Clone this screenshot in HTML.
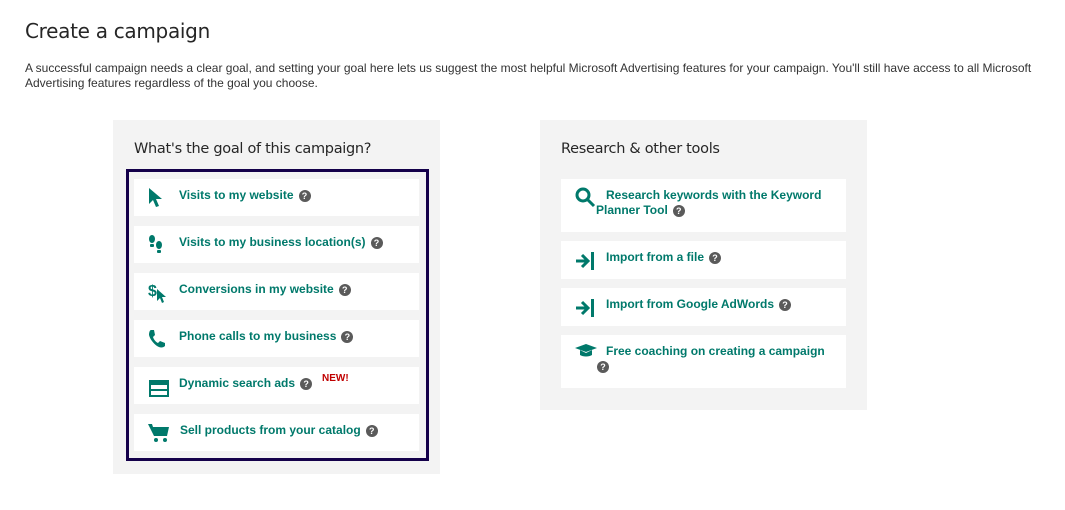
<!DOCTYPE html>
<html><head><style>
*{margin:0;padding:0;box-sizing:border-box}
body{width:1065px;height:510px;background:#fff;font-family:"Liberation Sans",Arial,sans-serif;position:relative;overflow:hidden;color:#333}
.a{position:absolute}
h1{position:absolute;left:25px;top:19px;font-size:20px;font-weight:normal;color:#262626;font-family:"DejaVu Sans","Liberation Sans",sans-serif;letter-spacing:-0.3px}
p.d{position:absolute;left:25px;top:61px;width:1020px;font-size:12px;line-height:15px;color:#333}
.panel{background:#f3f3f3}
.ph{position:absolute;font-size:14.5px;color:#262626;font-family:"DejaVu Sans","Liberation Sans",sans-serif;letter-spacing:-0.3px}
.it{position:absolute;background:#fff;color:#00796b;font-weight:bold;font-size:12px}
.it .t{position:absolute;top:9px;left:45px;white-space:nowrap}
.it svg.ic{position:absolute}
.q{display:inline-block;width:12px;height:12px;border-radius:50%;background:#5a5a5a;color:#fff;font-size:9px;line-height:12px;text-align:center;vertical-align:0px;margin-left:5px}
</style></head><body>
<h1>Create a campaign</h1>
<p class="d">A successful campaign needs a clear goal, and setting your goal here lets us suggest the most helpful Microsoft Advertising features for your campaign. You'll still have access to all Microsoft Advertising features regardless of the goal you choose.</p>

<div class="a panel" style="left:113px;top:120px;width:327px;height:354px"></div>
<div class="ph" style="left:134px;top:141px">What's the goal of this campaign?</div>
<div class="a" style="left:126px;top:169px;width:303px;height:292px;border:3px solid #14004a"></div>

<div class="it" style="left:134px;top:179px;width:285px;height:37px">
<svg class="ic" style="left:14px;top:8px" width="16" height="22" viewBox="0 0 16 22"><path d="M1 1 L1 17 L5 13 L8 20 L11 19 L8 12 L14 12 Z" fill="#00796b"/></svg>
<span class="t">Visits to my website<span class="q">?</span></span></div>

<div class="it" style="left:134px;top:226px;width:285px;height:37px">
<svg class="ic" style="left:14px;top:8px" width="16" height="22" viewBox="0 0 16 22"><ellipse cx="4" cy="5" rx="3" ry="4" fill="#00796b"/><rect x="2" y="10" width="4" height="3" rx="1" fill="#00796b"/><ellipse cx="11" cy="11" rx="3" ry="4" fill="#00796b"/><rect x="9" y="16" width="4" height="3" rx="1" fill="#00796b"/></svg>
<span class="t">Visits to my business location(s)<span class="q">?</span></span></div>

<div class="it" style="left:134px;top:273px;width:285px;height:37px">
<svg class="ic" style="left:14px;top:8px" width="22" height="24" viewBox="0 0 22 24"><text x="0" y="15" font-family="Liberation Sans" font-weight="bold" font-size="16" fill="#00796b">$</text><path d="M9 8 L9 20 L12 17 L14 22 L16 21 L14 16 L18 16 Z" fill="#00796b"/></svg>
<span class="t">Conversions in my website<span class="q">?</span></span></div>

<div class="it" style="left:134px;top:320px;width:285px;height:37px">
<svg class="ic" style="left:14px;top:9px" width="18" height="20" viewBox="0 0 18 20"><path d="M3 1 L6 1 L7 6 L5 8 C6 11 8 13 10 14 L12 12 L17 14 L17 17 C15 19 12 19 9 17 C5 14 2 10 1 6 C1 3 2 1 3 1Z" fill="#00796b"/></svg>
<span class="t">Phone calls to my business<span class="q">?</span></span></div>

<div class="it" style="left:134px;top:367px;width:285px;height:37px">
<svg class="ic" style="left:15px;top:13px" width="20" height="17" viewBox="0 0 20 17"><rect x="0" y="0" width="20" height="17" fill="#00796b"/><rect x="2" y="5" width="16" height="4" fill="#fff"/><rect x="2" y="11" width="16" height="4" fill="#fff"/></svg>
<span class="t">Dynamic search ads<span class="q">?</span></span>
<span class="a" style="left:188px;top:6px;color:#c00000;font-size:10px">NEW!</span></div>

<div class="it" style="left:134px;top:414px;width:285px;height:37px">
<svg class="ic" style="left:14px;top:9px" width="22" height="20" viewBox="0 0 22 20"><path d="M0 1 L4 1 L5 4 L21 4 L19 13 L6 13 Z" fill="#00796b"/><circle cx="8" cy="17" r="2" fill="#00796b"/><circle cx="17" cy="17" r="2" fill="#00796b"/></svg>
<span class="t" style="left:46px">Sell products from your catalog<span class="q">?</span></span></div>

<div class="a panel" style="left:540px;top:120px;width:327px;height:290px"></div>
<div class="ph" style="left:561px;top:141px">Research &amp; other tools</div>

<div class="it" style="left:561px;top:179px;width:285px;height:53px">
<svg class="ic" style="left:14px;top:8px" width="22" height="22" viewBox="0 0 22 22"><circle cx="8" cy="8" r="6" fill="none" stroke="#00796b" stroke-width="3"/><path d="M12 12 L19 19" stroke="#00796b" stroke-width="3"/></svg>
<span class="t" style="left:35px;top:9px;line-height:15px;white-space:normal;width:240px;text-indent:10px">Research keywords with the Keyword Planner Tool<span class="q" style="text-indent:0">?</span></span></div>

<div class="it" style="left:561px;top:241px;width:285px;height:38px">
<svg class="ic" style="left:14px;top:10px" width="20" height="20" viewBox="0 0 20 20"><path d="M1 10 L12 10 M7 4 L13 10 L7 16" stroke="#00796b" stroke-width="3" fill="none"/><rect x="16" y="1" width="3" height="18" fill="#00796b"/></svg>
<span class="t">Import from a file<span class="q">?</span></span></div>

<div class="it" style="left:561px;top:288px;width:285px;height:38px">
<svg class="ic" style="left:14px;top:10px" width="20" height="20" viewBox="0 0 20 20"><path d="M1 10 L12 10 M7 4 L13 10 L7 16" stroke="#00796b" stroke-width="3" fill="none"/><rect x="16" y="1" width="3" height="18" fill="#00796b"/></svg>
<span class="t">Import from Google AdWords<span class="q">?</span></span></div>

<div class="it" style="left:561px;top:335px;width:285px;height:53px">
<svg class="ic" style="left:14px;top:9px" width="22" height="14" viewBox="0 0 22 14"><path d="M0 4 L11 0 L22 4 L11 8 Z" fill="#00796b"/><path d="M5 6 L5 11 C8 13 14 13 17 11 L17 6 L11 9 Z" fill="#00796b"/></svg>
<span class="t">Free coaching on creating a campaign</span>
<span class="q a" style="left:36px;top:26px;margin:0">?</span></div>
</body></html>
